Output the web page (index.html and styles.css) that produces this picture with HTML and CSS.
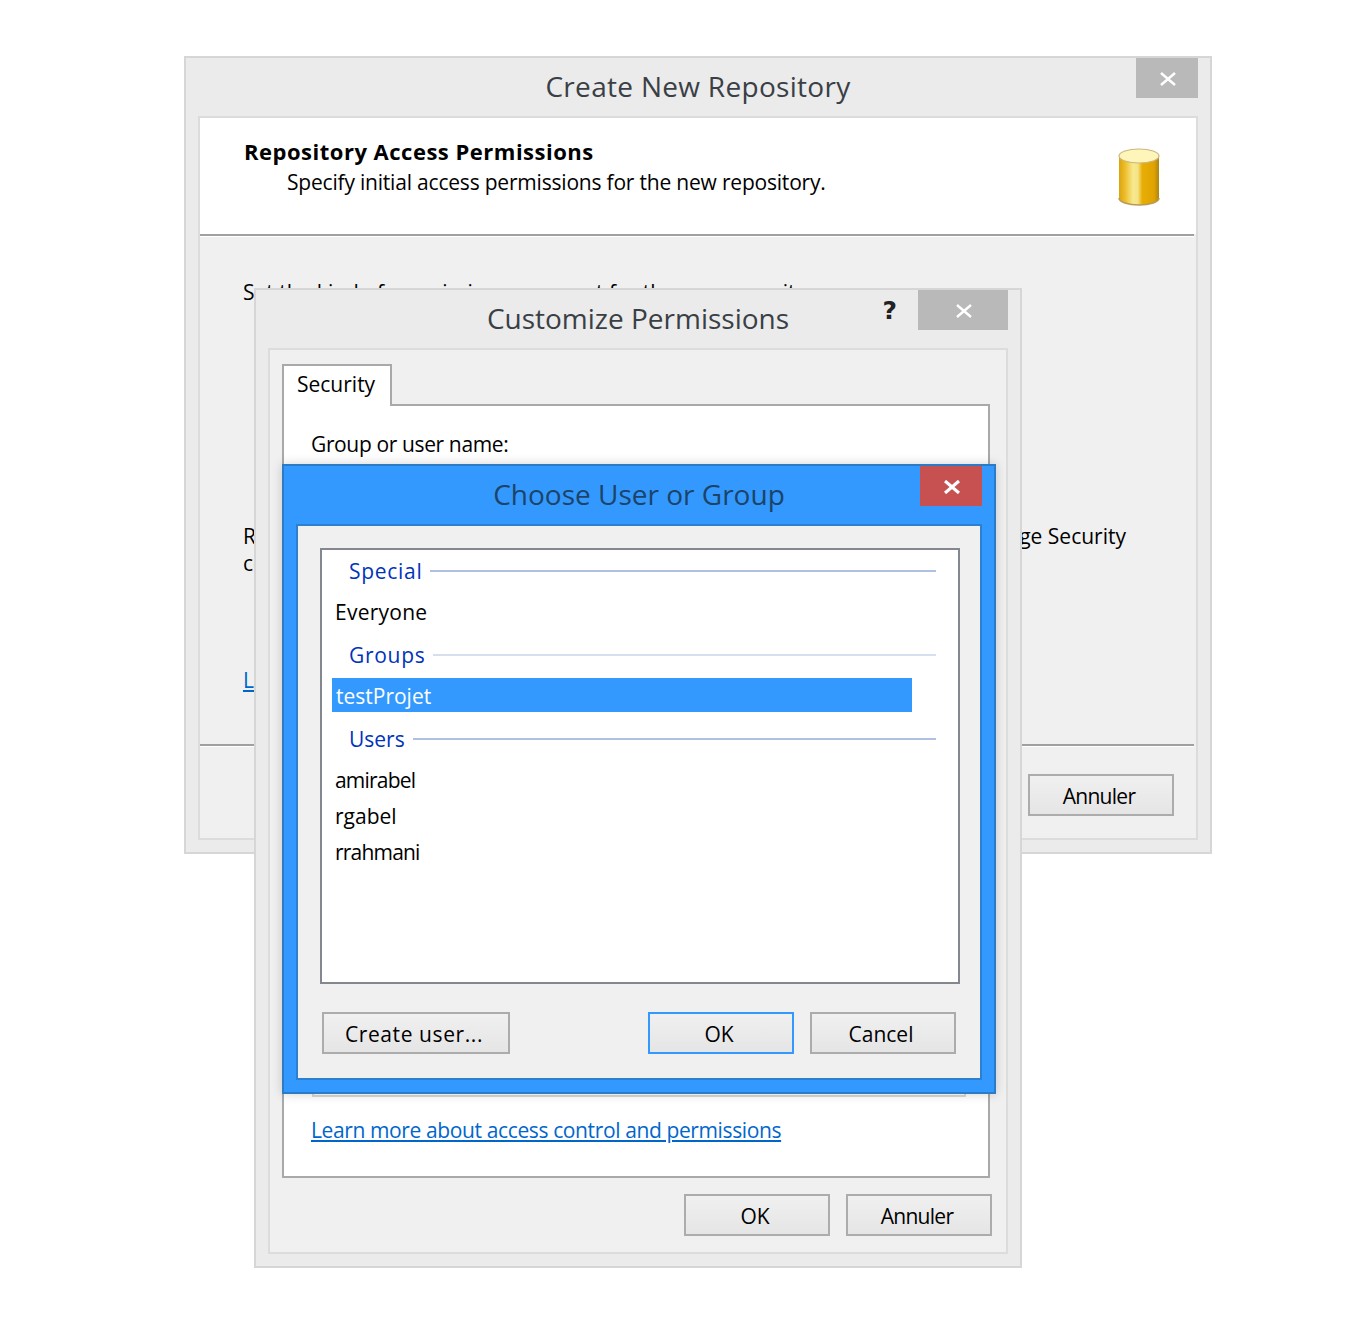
FILE: index.html
```html
<!DOCTYPE html>
<html lang="en">

<head>
    <meta charset="UTF-8">
    <title>Create New Repository</title>
    <link rel="stylesheet" href="styles.css">
</head>

<body>
    <!-- back window -->
    <section class="window window-repo">
        <div class="titlebar">
            <h1 class="title title-repo">Create New Repository</h1>
            <span class="close close-idle close-wide-62">
                <svg width="16" height="14" viewBox="0 0 16 14"><path d="M1 1 15 13M15 1 1 13" stroke="#fff" stroke-width="2.4" fill="none"/></svg>
            </span>
        </div>
        <div class="frame wizard">
            <div class="wizard-head">
                <div>
                    <p class="head-title">Repository Access Permissions</p>
                    <p class="head-sub">Specify initial access permissions for the new repository.</p>
                </div>
                <svg class="repo-icon" width="42" height="58" viewBox="0 0 42 58">
                    <defs>
                        <linearGradient id="gold" x1="0" x2="1" y1="0" y2="0">
                            <stop offset="0" stop-color="#d9a50f"/>
                            <stop offset="0.15" stop-color="#edbd2a"/>
                            <stop offset="0.35" stop-color="#f7e98f"/>
                            <stop offset="0.47" stop-color="#f5e387"/>
                            <stop offset="0.58" stop-color="#e8ae05"/>
                            <stop offset="0.88" stop-color="#e0a200"/>
                            <stop offset="1" stop-color="#a98517"/>
                        </linearGradient>
                    </defs>
                    <path d="M1 8V50C1 54 10 57 21 57S41 54 41 50V8Z" fill="url(#gold)"/>
                    <path d="M1 50C1 54 10 57 21 57S41 54 41 50" fill="none" stroke="#b99a55" stroke-width="1.5"/>
                    <ellipse cx="21" cy="8" rx="20" ry="7" fill="#fdf5b9" stroke="#cdb67a" stroke-width="1.2"/>
                </svg>
            </div>
            <div class="rule rule-white"></div>
            <div class="wizard-body">
                <p class="line line-set">Set the kind of permissions you want for the new repository.</p>
                <p class="line line-split"><span>Repository access can be changed later</span><span>using Manage Security</span></p>
                <p class="line line-cmd">command.</p>
                <p class="line line-learn"><a href="#">Learn more about permissions</a></p>
            </div>
            <div class="rule rule-white"></div>
            <div class="actions actions-wizard">
                <button class="btn">OK</button>
                <button class="btn btn-annuler">Annuler</button>
            </div>
        </div>
    </section>

    <!-- middle window -->
    <section class="window window-perms">
        <div class="titlebar">
            <h1 class="title">Customize Permissions</h1>
            <span class="help">?</span>
            <span class="close close-idle close-wide-90">
                <svg width="16" height="14" viewBox="0 0 16 14"><path d="M1 1 15 13M15 1 1 13" stroke="#fff" stroke-width="2.4" fill="none"/></svg>
            </span>
        </div>
        <div class="frame perms">
            <div class="tab">Security</div>
            <div class="tab-panel">
                <p class="group-label">Group or user name:</p>
                <div class="users-box"></div>
                <p class="learn"><a href="#">Learn more about access control and permissions</a></p>
            </div>
            <div class="actions actions-perms">
                <button class="btn">OK</button>
                <button class="btn btn-annuler">Annuler</button>
            </div>
        </div>
    </section>

    <!-- front window -->
    <section class="window window-choose">
        <div class="titlebar">
            <h1 class="title title-active">Choose User or Group</h1>
            <span class="close close-active close-wide-62">
                <svg width="16" height="14" viewBox="0 0 16 14"><path d="M1 1 15 13M15 1 1 13" stroke="#fff" stroke-width="3.2" fill="none"/></svg>
            </span>
        </div>
        <div class="frame frame-active choose">
            <div class="listbox">
                <div class="list-group">
                    <div class="list-heading heading-wide">Special</div>
                    <div class="list-row row-everyone">Everyone</div>
                </div>
                <div class="list-group">
                    <div class="list-heading heading-wide list-heading-faint">Groups</div>
                    <div class="list-row list-row-selected">testProjet</div>
                </div>
                <div class="list-group">
                    <div class="list-heading">Users</div>
                    <div class="list-row row-tight">amirabel</div>
                    <div class="list-row">rgabel</div>
                    <div class="list-row row-tight">rrahmani</div>
                </div>
            </div>
            <div class="choose-actions">
                <button class="btn btn-create">Create user...</button>
                <div class="choose-right">
                    <button class="btn btn-default">OK</button>
                    <button class="btn">Cancel</button>
                </div>
            </div>
        </div>
    </section>
</body>

</html>
```
FILE: styles.css
```css
* {
    box-sizing: border-box;
}

body {
    margin: 0;
    height: 1342px;
    position: relative;
    background: #fff;
    font-family: "Open Sans", "Noto Sans", sans-serif;
    font-size: 21px;
    color: #000;
    overflow: hidden;
}

p,
h1 {
    margin: 0;
}

a {
    color: #0066cc;
}

.window {
    position: absolute;
    border: 2px solid #d6d6d6;
    background: #ebebeb;
    padding: 0 12px 12px;
    display: flex;
    flex-direction: column;
}

.window-repo {
    left: 184px;
    top: 56px;
    width: 1028px;
    height: 798px;
}

.window-perms {
    left: 254px;
    top: 288px;
    width: 768px;
    height: 980px;
}

.window-choose {
    left: 282px;
    top: 464px;
    width: 714px;
    height: 630px;
    border-color: #2b7cc6;
    background: #3399ff;
    box-shadow: 0 0 10px rgba(0, 0, 0, 0.18);
}

.titlebar {
    height: 58px;
    position: relative;
    flex: none;
    display: flex;
    align-items: center;
    justify-content: center;
}

.title {
    font-size: 28px;
    font-weight: 400;
    color: #3a3f46;
    line-height: 56px;
    margin-bottom: 2px;
}

.title-repo {
    letter-spacing: 0.3px;
}

.title-active {
    color: #1c4468;
}

.close {
    position: absolute;
    top: 0;
    right: 0;
    height: 40px;
    padding: 2px 0 0 2px;
    display: flex;
    align-items: center;
    justify-content: center;
}

.close-idle {
    background: #b9b9b9;
}

.close-active {
    background: #c75050;
}

.close-wide-62 {
    width: 62px;
}

.close-wide-90 {
    width: 90px;
}

.help {
    position: absolute;
    top: 3px;
    right: 111px;
    font-family: "DejaVu Sans", sans-serif;
    font-size: 25px;
    font-weight: bold;
    line-height: 36px;
    color: #222;
}

.frame {
    flex: 1;
    border: 2px solid #dcdcdc;
    background: #f0f0f0;
    min-height: 0;
}

.frame-active {
    border-color: #2b80d0;
}

/* wizard */
.wizard {
    display: flex;
    flex-direction: column;
}

.wizard-head {
    height: 116px;
    background: #fff;
    padding: 20px 36px 0 44px;
    display: flex;
    justify-content: space-between;
}

.head-title {
    font-size: 22px;
    font-weight: bold;
    letter-spacing: 0.5px;
    line-height: 26px;
}

.head-sub {
    margin-left: 43px;
    letter-spacing: -0.2px;
    line-height: 36px;
}

.repo-icon {
    margin-top: 10px;
}

.rule {
    height: 2px;
    background: #a0a0a0;
    margin-right: 2px;
    flex: none;
}

.rule-white {
    box-sizing: content-box;
    border-bottom: 1px solid #fff;
}

.wizard-body {
    flex: 1;
    padding: 0 70px 0 43px;
    line-height: 28px;
    min-height: 0;
}

.line-set {
    margin-top: 41px;
}

.line-split {
    margin-top: 216px;
    display: flex;
    justify-content: space-between;
}

.line-cmd {
    margin-top: -1px;
}

.line-learn {
    margin-top: 89px;
}

.actions {
    display: flex;
    justify-content: flex-end;
    gap: 16px;
}

.actions-wizard {
    padding: 27px 22px 0 0;
    height: 91px;
    flex: none;
}

/* permissions */
.perms {
    padding: 14px 14px 0 12px;
}

.tab {
    position: relative;
    z-index: 1;
    width: 110px;
    height: 42px;
    margin-bottom: -2px;
    padding-left: 13px;
    border: 2px solid #a9a9a9;
    border-bottom: 0;
    background: #fff;
    line-height: 36px;
}

.tab-panel {
    height: 774px;
    margin-right: 2px;
    border: 2px solid #a9a9a9;
    background: #fff;
    padding: 24px 0 0 27px;
}

.group-label {
    letter-spacing: -0.37px;
    line-height: 28px;
}

.users-box {
    height: 631px;
    margin: 8px 22px 0 1px;
    border: 2px solid #d8d8d8;
}

.learn {
    margin-top: 19px;
    letter-spacing: -0.38px;
    line-height: 28px;
}

.actions-perms {
    margin-top: 16px;
}

.btn {
    width: 146px;
    height: 42px;
    padding: 2px 4px 0 0;
    border: 2px solid #acacac;
    background: linear-gradient(#f0f0f0, #e5e5e5);
    font: inherit;
    color: #000;
}

.btn-default {
    border-color: #3399ff;
}

.btn-annuler {
    letter-spacing: -0.7px;
}

.btn-create {
    width: 188px;
    letter-spacing: 0.6px;
}

/* choose user dialog */
.choose {
    padding: 22px 20px 0 22px;
}

.listbox {
    height: 436px;
    border: 2px solid #828790;
    background: #fff;
    padding-top: 4px;
}

.list-group {
    margin-bottom: 10px;
}

.list-heading {
    height: 34px;
    padding: 0 22px 0 27px;
    display: flex;
    align-items: center;
    color: #0033bc;
    line-height: 34px;
}

.heading-wide {
    letter-spacing: 0.7px;
}

.list-heading::after {
    content: "";
    flex: 1;
    height: 2px;
    margin-left: 8px;
    background: #b0c0e0;
}

.list-heading-faint::after {
    background: #d5dff0;
}

.list-row {
    width: 580px;
    height: 34px;
    margin: 2px 0 0 10px;
    padding-left: 3px;
    line-height: 36px;
}

.list-heading + .list-row {
    margin-top: 6px;
}

.row-everyone {
    letter-spacing: 0.25px;
}

.row-tight {
    letter-spacing: -0.8px;
}

.list-row-selected {
    background: #3399ff;
    color: #fff;
    padding-left: 4px;
}

.choose-actions {
    margin-top: 28px;
    padding: 0 4px 0 2px;
    display: flex;
    justify-content: space-between;
}

.choose-right {
    display: flex;
    gap: 16px;
}
```
